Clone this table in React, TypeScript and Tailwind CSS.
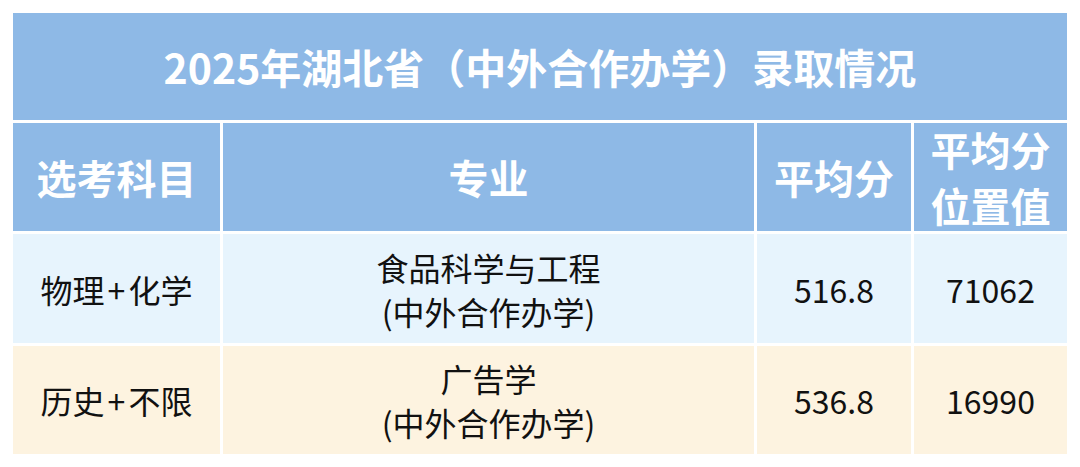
import React from "react";

const font = { fontFamily: '"Noto Sans CJK SC", "Noto Sans", sans-serif' };

export default function App() {
  const head = "flex items-center justify-center bg-[#8EB9E6] text-white font-bold text-[40px]";
  const c1 = "flex items-center justify-center bg-[#E7F4FD] text-[#111] text-[32px]";
  const c2 = "flex items-center justify-center bg-[#FDF3E0] text-[#111] text-[32px]";
  return (
    <div className="w-[1080px] h-[467px] bg-white pl-[13px] pt-[13px]" style={font}>
      <div className="grid w-[1054px] grid-cols-[207px_531px_154px_153px] grid-rows-[107px_108px_109px_108px] gap-[3px]">
        <div className={`${head} col-span-4 text-[41px]`}>2025年湖北省（中外合作办学）录取情况</div>
        <div className={head}>选考科目</div>
        <div className={head}>专业</div>
        <div className={head}>平均分</div>
        <div className={`${head} flex-col leading-[56px]`}>
          <span>平均分</span>
          <span>位置值</span>
        </div>

        <div className={c1}>
          物理<span className="px-[3px]">+</span>化学
        </div>
        <div className={`${c1} flex-col leading-[44px]`}>
          <span>食品科学与工程</span>
          <span>(中外合作办学)</span>
        </div>
        <div className={c1}>516.8</div>
        <div className={c1}>71062</div>

        <div className={c2}>
          历史<span className="px-[3px]">+</span>不限
        </div>
        <div className={`${c2} flex-col leading-[44px]`}>
          <span>广告学</span>
          <span>(中外合作办学)</span>
        </div>
        <div className={c2}>536.8</div>
        <div className={c2}>16990</div>
      </div>
    </div>
  );
}
